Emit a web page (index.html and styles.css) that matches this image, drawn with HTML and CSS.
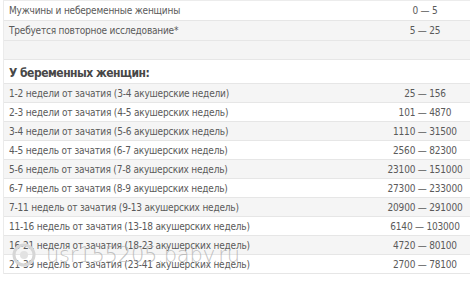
FILE: index.html
```html
<!DOCTYPE html>
<html lang="ru">
<head>
<meta charset="utf-8">
<link rel="stylesheet" href="styles.css">
</head>
<body>
<div class="page">
  <div class="table">
    <div class="row top white"><div class="name">Мужчины и небеременные женщины</div><div class="val">0 — 5</div></div>
    <div class="row top gray"><div class="name">Требуется повторное исследование*</div><div class="val">5 — 25</div></div>
    <div class="row spacer gray"><div class="name"></div><div class="val"></div></div>
    <div class="row head white"><div class="name">У беременных женщин:</div><div class="val"></div></div>
    <div class="row gray"><div class="name">1-2 недели от зачатия (3-4 акушерские недели)</div><div class="val">25 — 156</div></div>
    <div class="row white"><div class="name">2-3 недели от зачатия (4-5 акушерских недель)</div><div class="val">101 — 4870</div></div>
    <div class="row gray"><div class="name">3-4 недели от зачатия (5-6 акушерских недель)</div><div class="val">1110 — 31500</div></div>
    <div class="row white"><div class="name">4-5 недель от зачатия (6-7 акушерских недель)</div><div class="val">2560 — 82300</div></div>
    <div class="row gray"><div class="name">5-6 недель от зачатия (7-8 акушерских недель)</div><div class="val">23100 — 151000</div></div>
    <div class="row white"><div class="name">6-7 недель от зачатия (8-9 акушерских недель)</div><div class="val">27300 — 233000</div></div>
    <div class="row gray"><div class="name">7-11 недель от зачатия (9-13 акушерских недель)</div><div class="val">20900 — 291000</div></div>
    <div class="row white"><div class="name">11-16 недель от зачатия (13-18 акушерских недель)</div><div class="val">6140 — 103000</div></div>
    <div class="row gray"><div class="name">16-21 неделя от зачатия (18-23 акушерских недель)</div><div class="val">4720 — 80100</div></div>
    <div class="row white"><div class="name">21-39 недель от зачатия (23-41 акушерских недель)</div><div class="val">2700 — 78100</div></div>
  </div>
  <div class="watermark">
    <svg class="wm-logo" width="30" height="26" viewBox="0 0 30 26">
      <circle cx="14" cy="13" r="10" fill="none" stroke="#d6d6d6" stroke-width="3"/>
      <circle cx="14" cy="13" r="4" fill="#e2e2e2"/>
    </svg>
    <span class="wm-text">usr155205.baby.ru</span>
  </div>
</div>
</body>
</html>
```
FILE: styles.css
```css
html, body {
  margin: 0;
  padding: 0;
  background: #ffffff;
}
.page {
  position: relative;
  width: 470px;
  height: 283px;
  overflow: hidden;
  font-family: "DejaVu Sans Condensed", "DejaVu Sans", sans-serif;
  font-size: 10px;
  letter-spacing: -0.2px;
  color: #5a5a5a;
}
.table {
  margin-left: 3px;
  width: 466px;
  border-left: 1px solid #ebebeb;
  border-right: 1px solid #ebebeb;
  border-top: 1px solid #ececec;
  display: flex;
  flex-direction: column;
}
.row {
  display: grid;
  grid-template-columns: 1fr 90px;
  align-items: center;
  height: 18px;
  border-bottom: 1px solid #e6e6e6;
}
.row.top { height: 19px; }
.row.spacer { height: 18px; background: #f4f4f4; }
.row.head { height: 23px; }
.white { background: #ffffff; }
.gray { background: #f5f5f5; }
.name {
  padding-left: 5px;
  white-space: nowrap;
}
.val {
  text-align: center;
  white-space: nowrap;
}
.head .name {
  font-family: "DejaVu Sans Condensed", "DejaVu Sans", sans-serif;
  font-weight: bold;
  font-size: 12px;
  letter-spacing: -0.5px;
  color: #474747;
  padding-top: 2px;
}
.watermark {
  position: absolute;
  left: 10px;
  top: 242px;
  display: flex;
  align-items: center;
  gap: 6px;
}
.wm-text {
  font-family: "DejaVu Sans", sans-serif;
  font-weight: 200;
  font-size: 21px;
  color: rgba(170, 170, 170, 0.7);
}
```
